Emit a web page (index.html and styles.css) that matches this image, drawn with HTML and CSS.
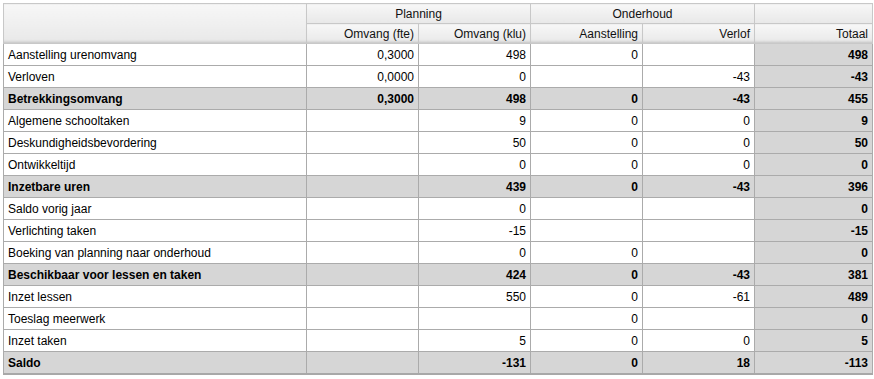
FILE: index.html
```html
<!DOCTYPE html>
<html>
<head>
<meta charset="utf-8">
<link rel="stylesheet" href="styles.css">
</head>
<body>
<div class="wrap">
<table class="grid">
<colgroup>
<col class="c-label"><col class="c-num"><col class="c-num"><col class="c-num"><col class="c-num"><col class="c-tot">
</colgroup>
<thead>
<tr class="h1">
<th rowspan="2"></th>
<th colspan="2" class="center">Planning</th>
<th colspan="2" class="center">Onderhoud</th>
<th></th>
</tr>
<tr class="h2">
<th>Omvang (fte)</th>
<th>Omvang (klu)</th>
<th>Aanstelling</th>
<th>Verlof</th>
<th>Totaal</th>
</tr>
</thead>
<tbody>
<tr><td>Aanstelling urenomvang</td><td>0,3000</td><td>498</td><td>0</td><td></td><td class="tot">498</td></tr>
<tr><td>Verloven</td><td>0,0000</td><td>0</td><td></td><td>-43</td><td class="tot">-43</td></tr>
<tr class="sum"><td>Betrekkingsomvang</td><td>0,3000</td><td>498</td><td>0</td><td>-43</td><td class="tot">455</td></tr>
<tr><td>Algemene schooltaken</td><td></td><td>9</td><td>0</td><td>0</td><td class="tot">9</td></tr>
<tr><td>Deskundigheidsbevordering</td><td></td><td>50</td><td>0</td><td>0</td><td class="tot">50</td></tr>
<tr><td>Ontwikkeltijd</td><td></td><td>0</td><td>0</td><td>0</td><td class="tot">0</td></tr>
<tr class="sum"><td>Inzetbare uren</td><td></td><td>439</td><td>0</td><td>-43</td><td class="tot">396</td></tr>
<tr><td>Saldo vorig jaar</td><td></td><td>0</td><td></td><td></td><td class="tot">0</td></tr>
<tr><td>Verlichting taken</td><td></td><td>-15</td><td></td><td></td><td class="tot">-15</td></tr>
<tr><td>Boeking van planning naar onderhoud</td><td></td><td>0</td><td>0</td><td></td><td class="tot">0</td></tr>
<tr class="sum"><td>Beschikbaar voor lessen en taken</td><td></td><td>424</td><td>0</td><td>-43</td><td class="tot">381</td></tr>
<tr><td>Inzet lessen</td><td></td><td>550</td><td>0</td><td>-61</td><td class="tot">489</td></tr>
<tr><td>Toeslag meerwerk</td><td></td><td></td><td>0</td><td></td><td class="tot">0</td></tr>
<tr><td>Inzet taken</td><td></td><td>5</td><td>0</td><td>0</td><td class="tot">5</td></tr>
<tr class="sum last"><td>Saldo</td><td></td><td>-131</td><td>0</td><td>18</td><td class="tot">-113</td></tr>
</tbody>
</table>
</div>
</body>
</html>
```
FILE: styles.css
```css
html, body {
  margin: 0;
  padding: 0;
  background: #ffffff;
}
.wrap {
  padding: 3px 3px 0 3px;
}
.grid {
  border-collapse: collapse;
  width: 869px;
  table-layout: fixed;
  font-family: "Liberation Sans", Arial, sans-serif;
  font-size: 12px;
  color: #000;
  border: 1px solid #a8a8a8;
  border-bottom: 2px solid #a8a8a8;
}
.c-label { width: 303px; }
.c-num { width: 112px; }
.c-tot { width: 118px; }
.grid th {
  height: 19px;
  padding: 0 4px;
  font-weight: normal;
  text-align: right;
  color: #111;
  border: 1px solid #c8c8c8;
  background: linear-gradient(#f7f7f7, #e8e8e8);
}
.grid th.center { text-align: center; }
.grid thead tr.h2 th {
  box-shadow: inset 0 -3px 3px -2px rgba(0,0,0,0.18);
}
.grid thead th[rowspan] {
  box-shadow: inset 0 -3px 3px -2px rgba(0,0,0,0.18);
}
.grid td {
  height: 20px;
  padding: 1px 4px 0 4px;
  text-align: right;
  border: 1px solid #ababab;
  background: #ffffff;
  white-space: nowrap;
}
.grid td:first-child { text-align: left; }
.grid td.tot {
  background: #d6d6d6;
  font-weight: bold;
}
.grid tr.sum td {
  background: #d6d6d6;
  font-weight: bold;
}
```
